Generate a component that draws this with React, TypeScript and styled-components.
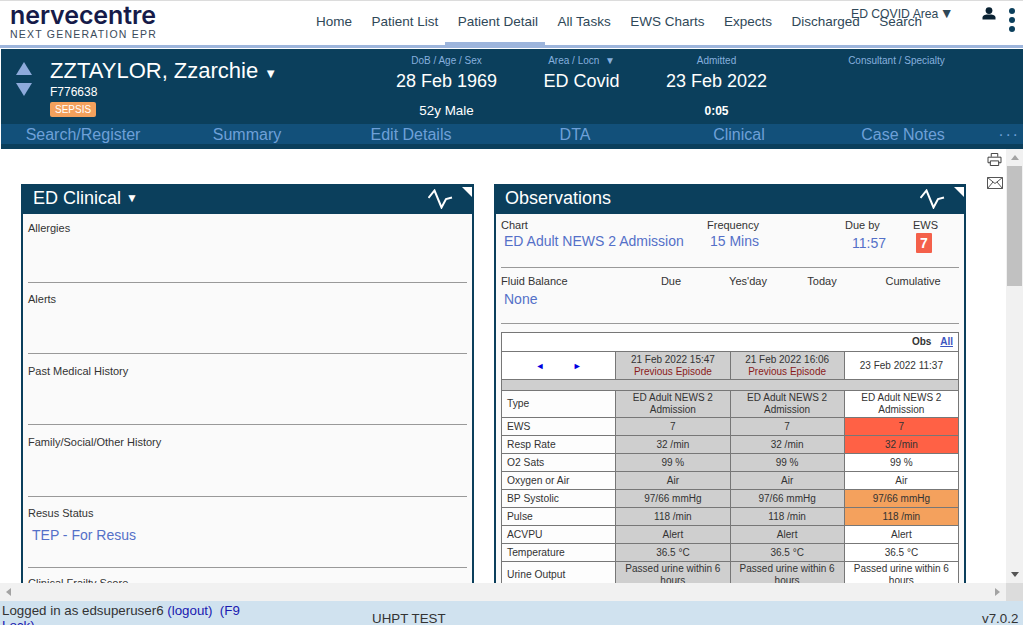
import React from "react";
import styled, { createGlobalStyle } from "styled-components";

const GlobalStyle = createGlobalStyle`
  html, body { margin: 0; padding: 0; background: #fff; overflow: hidden; }
  body { font-family: "Liberation Sans", Arial, sans-serif; color: #333; }
  * { box-sizing: border-box; }
`;

const navy = "#0b3f5c";

const Page = styled.div`
  width: 1023px;
  height: 625px;
  display: flex;
  flex-direction: column;
  overflow: hidden;
`;

/* top nav */
const TopNav = styled.header`
  position: relative;
  height: 49px;
  flex: none;
  display: flex;
  align-items: flex-start;
  border-top: 1px solid #dcdcdc;
  border-bottom: 1px solid #fff;
  background: #fff;
  &::after {
    content: "";
    position: absolute;
    left: 0;
    right: 0;
    bottom: 0;
    height: 3px;
    background: #9db5dc;
  }
`;
const Logo = styled.div`
  width: 303px;
  padding: 2px 0 0 10px;
  flex: none;
`;
const LogoWord = styled.div`
  font-family: "Inter", "Liberation Sans", sans-serif;
  font-weight: 600;
  font-size: 25px;
  line-height: 24px;
  letter-spacing: -0.1px;
  color: #161b49;
`;
const LogoSub = styled.div`
  font-family: "Liberation Sans", sans-serif;
  font-size: 10.5px;
  line-height: 12px;
  margin-top: 1px;
  letter-spacing: 1.22px;
  color: #3a4a5a;
  white-space: nowrap;
`;
const NavLink = styled.a<{ $active?: boolean }>`
  position: relative;
  z-index: 1;
  height: 45px;
  padding: 13px 6.5px 0 13px;
  font-size: 13.5px;
  line-height: 16px;
  color: #2f4858;
  white-space: nowrap;
  border-bottom: ${(p) => (p.$active ? "4px solid #9db5dc" : "none")};
`;
const AreaPicker = styled.div`
  position: absolute;
  top: 4px;
  left: 851px;
  font-size: 12.2px;
  line-height: 16px;
  color: #2f4858;
  white-space: nowrap;
`;
const AreaCaret = styled.span`
  font-size: 14px;
  margin-left: -2px;
`;
const UserIcon = styled.svg`
  position: absolute;
  top: 6px;
  left: 982px;
`;
const MoreDots = styled.div`
  position: absolute;
  top: 7px;
  left: 1009px;
  display: flex;
  flex-direction: column;
  gap: 3px;
`;
const Dot = styled.span`
  width: 6px;
  height: 6px;
  border-radius: 50%;
  background: ${navy};
`;

/* patient banner */
const Banner = styled.section`
  height: 100px;
  flex: none;
  margin-left: 1px;
  background: ${navy};
  display: flex;
  flex-direction: column;
`;
const BannerTop = styled.div`
  height: 75px;
  display: grid;
  grid-template-columns: 378px 135px 135px 135px 225px;
  flex: none;
`;
const PatientCell = styled.div`
  display: flex;
  padding: 11px 0 0 15px;
`;
const Arrows = styled.div`
  width: 34px;
  flex: none;
  display: flex;
  flex-direction: column;
  gap: 8px;
  padding-top: 2px;
`;
const NameLine = styled.div`
  font-size: 22px;
  line-height: 22px;
  color: #fff;
  white-space: nowrap;
`;
const NameCaret = styled.span`
  font-size: 13px;
`;
const Mrn = styled.div`
  font-size: 12px;
  line-height: 14px;
  color: #fff;
  font-weight: 400;
`;
const SepsisTag = styled.span`
  display: block;
  width: fit-content;
  margin-top: 3px;
  background: #f4a15d;
  color: #fff;
  font-size: 10px;
  line-height: 15px;
  padding: 0 5px;
  border-radius: 2px;
`;
const InfoCell = styled.div`
  display: flex;
  flex-direction: column;
  align-items: center;
  padding-top: 6px;
  text-align: center;
`;
const InfoLabel = styled.div`
  font-size: 10px;
  line-height: 12px;
  color: #86b0de;
  white-space: nowrap;
`;
const InfoValue = styled.div`
  font-size: 18px;
  line-height: 22px;
  margin-top: 3px;
  color: #fff;
  white-space: nowrap;
`;
const InfoSub = styled.div<{ $bold?: boolean }>`
  font-size: ${(p) => (p.$bold ? "12px" : "13.4px")};
  font-weight: ${(p) => (p.$bold ? 700 : 400)};
  line-height: 16px;
  margin-top: 11px;
  color: #fff;
`;
const TabBar = styled.nav`
  height: 20px;
  flex: none;
  background: #12507a;
  display: grid;
  grid-template-columns: repeat(6, 164px) 1fr;
`;
const Tab = styled.a`
  font-size: 16px;
  line-height: 22px;
  color: #6ea0d8;
  text-align: center;
  white-space: nowrap;
`;
const TabMore = styled.span`
  color: #6ea0d8;
  font-size: 16px;
  line-height: 14px;
  letter-spacing: 2.6px;
  text-align: right;
  padding-right: 3px;
`;

/* middle */
const Middle = styled.div`
  height: 434px;
  flex: none;
  display: flex;
`;
const Content = styled.main`
  position: relative;
  flex: 1;
  min-width: 0;
  overflow: hidden;
  display: flex;
  align-items: flex-start;
  gap: 20px;
  padding: 35px 0 0 21px;
`;
const SideTools = styled.div`
  position: absolute;
  top: 4px;
  left: 987px;
  display: flex;
  flex-direction: column;
  gap: 11px;
`;
const Panel = styled.section<{ $width: number }>`
  width: ${(p) => p.$width}px;
  flex: none;
  background: #fafafa;
  border: 2px solid ${navy};
  border-top: none;
  height: 600px;
`;
const PanelHead = styled.div<{ $left: number }>`
  position: relative;
  height: 30px;
  margin: 0 -2px;
  background: ${navy};
  color: #fff;
  display: flex;
  align-items: center;
  padding: 0 0 2px ${(p) => p.$left}px;
  font-size: 18px;
`;
const HeadCaret = styled.span`
  font-size: 12px;
  margin-left: 5px;
`;
const Corner = styled.span`
  position: absolute;
  top: 3px;
  right: 2px;
  width: 0;
  height: 0;
  border-top: 10px solid #fff;
  border-left: 10px solid transparent;
`;
const Pulse = styled.svg`
  position: absolute;
  top: 5px;
  right: 20px;
`;
const Section = styled.div<{ $h: number; $top?: number }>`
  height: ${(p) => p.$h}px;
  margin: 0 5px;
  padding-top: ${(p) => p.$top ?? 9}px;
  border-bottom: 1px solid #999;
`;
const Label = styled.div`
  font-size: 11px;
  line-height: 14px;
  color: #333;
  white-space: nowrap;
`;
const Value = styled.div<{ $indent?: number; $top?: number }>`
  font-size: 14px;
  line-height: 18px;
  color: #5470c8;
  padding-left: ${(p) => p.$indent ?? 3}px;
  margin-top: ${(p) => p.$top ?? 6}px;
  white-space: nowrap;
`;

/* observations */
const ObsBody = styled.div`
  padding: 0 5px;
`;
const ChartRow = styled.div`
  height: 54px;
  display: grid;
  grid-template-columns: 206px 138px 68px 1fr;
  padding-top: 4px;
  border-bottom: 1px solid #999;
`;
const FluidRow = styled.div`
  height: 56px;
  display: grid;
  grid-template-columns: 139px 62px 92px 56px 126px;
  padding-top: 6px;
  border-bottom: 1px solid #999;
`;
const CentreLabel = styled(Label)`
  text-align: center;
`;
const EwsBadge = styled.span`
  display: block;
  width: 16px;
  height: 20px;
  margin: 1px 0 0 3px;
  background: #f4604a;
  color: #fff;
  border-radius: 1px;
  font-size: 14px;
  font-weight: 700;
  line-height: 20px;
  text-align: center;
`;
const ObsTable = styled.table`
  width: 458px;
  margin-top: 8px;
  border-collapse: collapse;
  table-layout: fixed;
  font-size: 10px;
  line-height: 12px;
  color: #333;
  td { border: 1px solid #777; text-align: center; padding: 0 8px; vertical-align: middle; }
`;
const ObsHeadCell = styled.td`
  && { text-align: right; padding: 0 5px; height: 19px; font-weight: 700; background: #fff; }
  a { color: #3b55c0; text-decoration: underline; margin-left: 6px; }
`;
const RowLabel = styled.td`
  && { text-align: left; padding-left: 5px; background: #fdfdfd; font-size: 10.3px; }
`;
const Cell = styled.td<{ $bg?: string }>`
  background: ${(p) => p.$bg ?? "#fff"};
`;
const Row = styled.tr<{ $h: number }>`
  height: ${(p) => p.$h}px;
`;
const Pager = styled.td`
  && { background: #fff; color: #0000e0; font-size: 9px; padding: 0; word-spacing: 26px; }
`;
const Episode = styled.div`
  color: #8a1a1a;
`;

/* scrollbars and footer */
const VBar = styled.div`
  width: 17px;
  flex: none;
  background: #f1f1f1;
  display: flex;
  flex-direction: column;
  align-items: center;
  justify-content: space-between;
`;
const BarEnd = styled.div`
  height: 17px;
  flex: none;
  display: flex;
  align-items: center;
  justify-content: center;
`;
const Thumb = styled.div`
  width: 15px;
  height: 120px;
  flex: none;
  margin-bottom: auto;
  background: #c1c1c1;
`;
const HBar = styled.div`
  height: 18px;
  flex: none;
  display: flex;
  align-items: center;
  background: #f1f1f1;
`;
const HEnd = styled.div<{ $push?: boolean }>`
  width: 17px;
  height: 18px;
  margin-left: ${(p) => (p.$push ? "auto" : "0")};
  display: flex;
  align-items: center;
  justify-content: center;
`;
const HCorner = styled.div`
  width: 17px;
  height: 18px;
  background: #dcdcdc;
`;
const Footer = styled.footer`
  height: 24px;
  flex: none;
  display: grid;
  grid-template-columns: 372px 610px 1fr;
  background: #d0e2ef;
  overflow: hidden;
  font-size: 13.33px;
  line-height: 15px;
  color: #333;
`;
const FooterLogin = styled.div`
  width: 248px;
  padding: 2px 0 0 2px;
`;
const FooterLink = styled.a`
  color: #1a1ab0;
`;
const FooterCentre = styled.div`
  padding-top: 10px;
`;
const Version = styled.div`
  padding-top: 10px;
  white-space: nowrap;
`;

const PulseIcon = () => (
  <Pulse width="26" height="20" viewBox="0 0 26 20" fill="none" stroke="#fff" strokeWidth="2">
    <path d="M0.5 9 L6.5 1.5 L13.5 18.5 L18 10 L24 8.5" />
  </Pulse>
);

type ObsRow = { label: string; value: string; bg?: string };

const rows: ObsRow[] = [
  { label: "EWS", value: "7", bg: "#ff6145" },
  { label: "Resp Rate", value: "32 /min", bg: "#ff6145" },
  { label: "O2 Sats", value: "99 %" },
  { label: "Oxygen or Air", value: "Air" },
  { label: "BP Systolic", value: "97/66 mmHg", bg: "#f4a15d" },
  { label: "Pulse", value: "118 /min", bg: "#f4a15d" },
  { label: "ACVPU", value: "Alert" },
  { label: "Temperature", value: "36.5 °C" },
];

const grey = "#cfcfcf";

export default function App() {
  return (
    <Page>
      <GlobalStyle />
      <TopNav>
        <Logo>
          <LogoWord>nervecentre</LogoWord>
          <LogoSub>NEXT GENERATION EPR</LogoSub>
        </Logo>
        <NavLink>Home</NavLink>
        <NavLink>Patient List</NavLink>
        <NavLink $active>Patient Detail</NavLink>
        <NavLink>All Tasks</NavLink>
        <NavLink>EWS Charts</NavLink>
        <NavLink>Expects</NavLink>
        <NavLink>Discharged</NavLink>
        <NavLink>Search</NavLink>
        <AreaPicker>ED COVID Area <AreaCaret>▼</AreaCaret></AreaPicker>
        <UserIcon width="14" height="13" viewBox="0 0 14 13" fill="#0a2233">
          <circle cx="7" cy="3.6" r="3.4" />
          <path d="M0.5 12.5 V10.5 C0.5 8 4 7.5 7 7.5 C10 7.5 13.5 8 13.5 10.5 V12.5 Z" />
        </UserIcon>
        <MoreDots>
          <Dot />
          <Dot />
          <Dot />
        </MoreDots>
      </TopNav>

      <Banner>
        <BannerTop>
          <PatientCell>
            <Arrows>
              <svg width="16" height="13" viewBox="0 0 16 13" fill="#8eaadb"><path d="M8 0 L16 13 L0 13 Z" /></svg>
              <svg width="16" height="13" viewBox="0 0 16 13" fill="#8eaadb"><path d="M8 13 L16 0 L0 0 Z" /></svg>
            </Arrows>
            <div>
              <NameLine>ZZTAYLOR, Zzarchie <NameCaret>▼</NameCaret></NameLine>
              <Mrn>F776638</Mrn>
              <SepsisTag>SEPSIS</SepsisTag>
            </div>
          </PatientCell>
          <InfoCell>
            <InfoLabel>DoB / Age / Sex</InfoLabel>
            <InfoValue>28 Feb 1969</InfoValue>
            <InfoSub>52y Male</InfoSub>
          </InfoCell>
          <InfoCell>
            <InfoLabel>Area / Locn &nbsp;▼</InfoLabel>
            <InfoValue>ED Covid</InfoValue>
          </InfoCell>
          <InfoCell>
            <InfoLabel>Admitted</InfoLabel>
            <InfoValue>23 Feb 2022</InfoValue>
            <InfoSub $bold>0:05</InfoSub>
          </InfoCell>
          <InfoCell>
            <InfoLabel>Consultant / Specialty</InfoLabel>
          </InfoCell>
        </BannerTop>
        <TabBar>
          <Tab>Search/Register</Tab>
          <Tab>Summary</Tab>
          <Tab>Edit Details</Tab>
          <Tab>DTA</Tab>
          <Tab>Clinical</Tab>
          <Tab>Case Notes</Tab>
          <TabMore>...</TabMore>
        </TabBar>
      </Banner>

      <Middle>
        <Content>
          <SideTools>
            <svg width="15" height="13" viewBox="0 0 16 14" fill="none" stroke="#333">
              <path d="M4.5 4 V0.5 H11.5 V4 M3.5 10.5 H1 V4.5 H15 V10.5 H12.5 M3.5 8.5 H12.5 V13.5 H3.5 Z" />
            </svg>
            <svg width="16" height="12" viewBox="0 0 16 12" fill="none" stroke="#555">
              <path d="M0.5 0.5 H15.5 V11.5 H0.5 Z M0.5 0.5 L8 6.5 L15.5 0.5 M0.5 11.5 L6 5 M15.5 11.5 L10 5" />
            </svg>
          </SideTools>

          <Panel $width={453}>
            <PanelHead $left={12}>
              ED Clinical<HeadCaret>▼</HeadCaret>
              <PulseIcon />
              <Corner />
            </PanelHead>
            <Section $h={69} $top={7}><Label>Allergies</Label></Section>
            <Section $h={71}><Label>Alerts</Label></Section>
            <Section $h={71} $top={10}><Label>Past Medical History</Label></Section>
            <Section $h={72} $top={10}><Label>Family/Social/Other History</Label></Section>
            <Section $h={71}>
              <Label>Resus Status</Label>
              <Value $indent={4}>TEP - For Resus</Value>
            </Section>
            <Section $h={71} $top={8}><Label>Clinical Frailty Score</Label></Section>
          </Panel>

          <Panel $width={472}>
            <PanelHead $left={11}>
              Observations
              <PulseIcon />
              <Corner />
            </PanelHead>
            <ObsBody>
              <ChartRow>
                <div>
                  <Label>Chart</Label>
                  <Value $top={0}>ED Adult NEWS 2 Admission</Value>
                </div>
                <div>
                  <Label>Frequency</Label>
                  <Value $top={0}>15 Mins</Value>
                </div>
                <div>
                  <Label>Due by</Label>
                  <Value $indent={7} $top={2}>11:57</Value>
                </div>
                <div>
                  <Label>EWS</Label>
                  <EwsBadge>7</EwsBadge>
                </div>
              </ChartRow>
              <FluidRow>
                <div>
                  <Label>Fluid Balance</Label>
                  <Value $top={2}>None</Value>
                </div>
                <CentreLabel>Due</CentreLabel>
                <CentreLabel>Yes'day</CentreLabel>
                <CentreLabel>Today</CentreLabel>
                <CentreLabel>Cumulative</CentreLabel>
              </FluidRow>
              <ObsTable>
                <tbody>
                  <tr>
                    <ObsHeadCell colSpan={4}>Obs <a>All</a></ObsHeadCell>
                  </tr>
                  <Row $h={28}>
                    <Pager>◄ ►</Pager>
                    <Cell $bg={grey}>21 Feb 2022 15:47<Episode>Previous Episode</Episode></Cell>
                    <Cell $bg={grey}>21 Feb 2022 16:06<Episode>Previous Episode</Episode></Cell>
                    <Cell>23 Feb 2022 11:37</Cell>
                  </Row>
                  <Row $h={11}>
                    <Cell $bg={grey} colSpan={4} />
                  </Row>
                  <Row $h={27}>
                    <RowLabel>Type</RowLabel>
                    <Cell $bg={grey}>ED Adult NEWS 2 Admission</Cell>
                    <Cell $bg={grey}>ED Adult NEWS 2 Admission</Cell>
                    <Cell>ED Adult NEWS 2 Admission</Cell>
                  </Row>
                  {rows.map((r) => (
                    <Row $h={18} key={r.label}>
                      <RowLabel>{r.label}</RowLabel>
                      <Cell $bg={grey}>{r.value}</Cell>
                      <Cell $bg={grey}>{r.value}</Cell>
                      <Cell $bg={r.bg}>{r.value}</Cell>
                    </Row>
                  ))}
                  <Row $h={27}>
                    <RowLabel>Urine Output</RowLabel>
                    <Cell $bg={grey}>Passed urine within 6 hours</Cell>
                    <Cell $bg={grey}>Passed urine within 6 hours</Cell>
                    <Cell>Passed urine within 6 hours</Cell>
                  </Row>
                </tbody>
              </ObsTable>
            </ObsBody>
          </Panel>
        </Content>
        <VBar>
          <BarEnd>
            <svg width="8" height="5" viewBox="0 0 8 5" fill="#a3a3a3"><path d="M4 0 L8 5 L0 5 Z" /></svg>
          </BarEnd>
          <Thumb />
          <BarEnd>
            <svg width="8" height="5" viewBox="0 0 8 5" fill="#555"><path d="M4 5 L8 0 L0 0 Z" /></svg>
          </BarEnd>
        </VBar>
      </Middle>

      <HBar>
        <HEnd>
          <svg width="5" height="8" viewBox="0 0 5 8" fill="#a3a3a3"><path d="M0 4 L5 0 L5 8 Z" /></svg>
        </HEnd>
        <HEnd $push>
          <svg width="5" height="8" viewBox="0 0 5 8" fill="#a3a3a3"><path d="M5 4 L0 0 L0 8 Z" /></svg>
        </HEnd>
        <HCorner />
      </HBar>

      <Footer>
        <FooterLogin>
          Logged in as edsuperuser6 <FooterLink>(logout)</FooterLink>&nbsp; <FooterLink>(F9 Lock)</FooterLink>
        </FooterLogin>
        <FooterCentre>UHPT TEST</FooterCentre>
        <Version>v7.0.2</Version>
      </Footer>
    </Page>
  );
}
